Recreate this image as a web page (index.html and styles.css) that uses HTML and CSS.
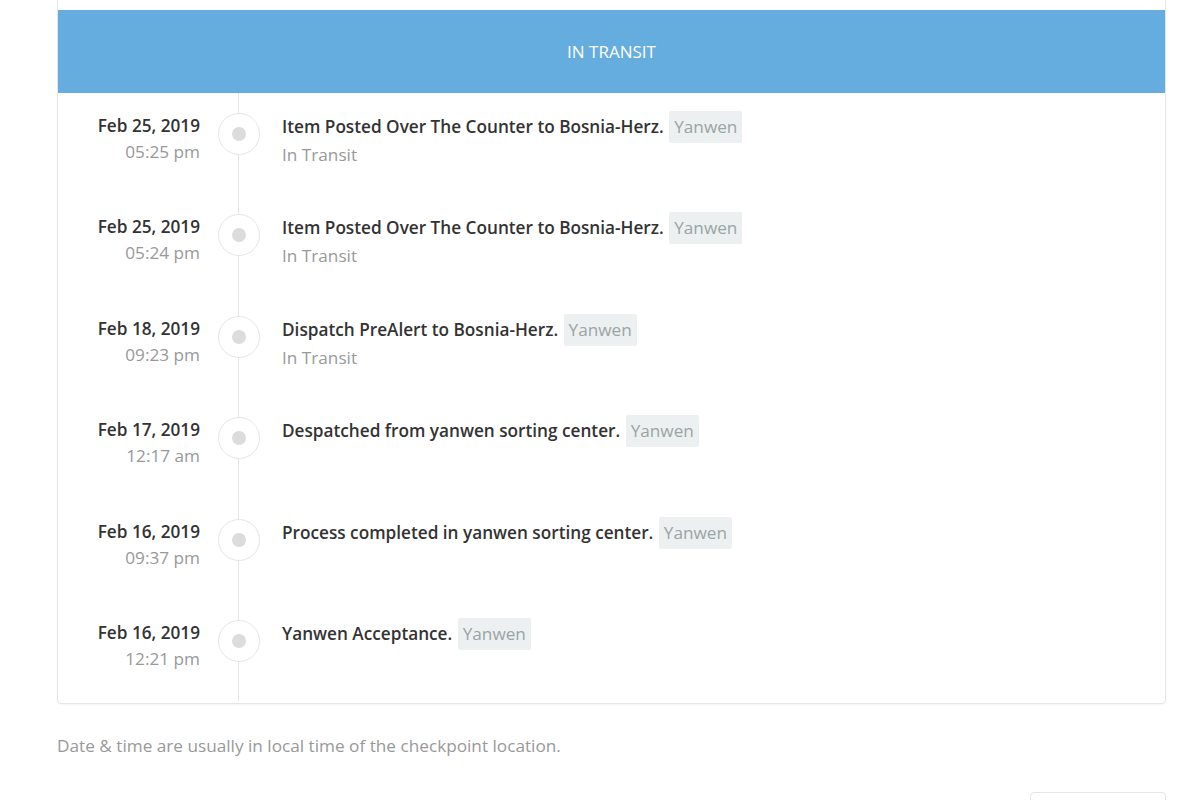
FILE: index.html
```html
<!DOCTYPE html>
<html lang="en">
<head>
<meta charset="utf-8">
<title>Tracking</title>
<link rel="stylesheet" href="styles.css">
</head>
<body>
<div class="page">
  <section class="card">
    <div class="status-bar">IN TRANSIT</div>
    <ol class="timeline">
      <li class="row">
        <div class="when"><div class="date">Feb 25, 2019</div><div class="time">05:25 pm</div></div>
        <div class="marker"><span class="dot"></span></div>
        <div class="what"><div class="title">Item Posted Over The Counter to Bosnia-Herz. <span class="badge">Yanwen</span></div><div class="sub">In Transit</div></div>
      </li>
      <li class="row">
        <div class="when"><div class="date">Feb 25, 2019</div><div class="time">05:24 pm</div></div>
        <div class="marker"><span class="dot"></span></div>
        <div class="what"><div class="title">Item Posted Over The Counter to Bosnia-Herz. <span class="badge">Yanwen</span></div><div class="sub">In Transit</div></div>
      </li>
      <li class="row">
        <div class="when"><div class="date">Feb 18, 2019</div><div class="time">09:23 pm</div></div>
        <div class="marker"><span class="dot"></span></div>
        <div class="what"><div class="title">Dispatch PreAlert to Bosnia-Herz. <span class="badge">Yanwen</span></div><div class="sub">In Transit</div></div>
      </li>
      <li class="row">
        <div class="when"><div class="date">Feb 17, 2019</div><div class="time">12:17 am</div></div>
        <div class="marker"><span class="dot"></span></div>
        <div class="what"><div class="title">Despatched from yanwen sorting center. <span class="badge">Yanwen</span></div></div>
      </li>
      <li class="row">
        <div class="when"><div class="date">Feb 16, 2019</div><div class="time">09:37 pm</div></div>
        <div class="marker"><span class="dot"></span></div>
        <div class="what"><div class="title">Process completed in yanwen sorting center. <span class="badge">Yanwen</span></div></div>
      </li>
      <li class="row">
        <div class="when"><div class="date">Feb 16, 2019</div><div class="time">12:21 pm</div></div>
        <div class="marker"><span class="dot"></span></div>
        <div class="what"><div class="title">Yanwen Acceptance. <span class="badge">Yanwen</span></div></div>
      </li>
    </ol>
  </section>
  <p class="note">Date &amp; time are usually in local time of the checkpoint location.</p>
  <div class="actions"><span class="btn"></span></div>
</div>
</body>
</html>
```

FILE: styles.css
```css
html, body {
  margin: 0;
  padding: 0;
  overflow: hidden;
  background: #fff;
}
body {
  font-family: "Open Sans", "Liberation Sans", sans-serif;
  color: #333;
}
.page {
  width: 1109px;
  margin-left: 57px;
}
.card {
  margin-top: -10px;
  padding: 19px 0 2px;
  border: 1px solid #e3e5e6;
  border-radius: 4px;
  box-shadow: 0 1px 2px rgba(0,0,0,0.04);
}
.status-bar {
  height: 83px;
  background: #65acdf;
  color: #fff;
  font-size: 17px;
  display: flex;
  align-items: center;
  justify-content: center;
}
.timeline {
  list-style: none;
  margin: 0;
  padding: 0;
}
.row {
  display: grid;
  grid-template-columns: 142px 76px 1fr;
  height: 101.4px;
}
.when {
  text-align: right;
  padding-top: 20px;
  font-size: 17.2px;
  line-height: 26px;
}
.date { color: #333; font-weight: 600; }
.time { color: #999; }
.marker {
  background: linear-gradient(#e6e6e6, #e6e6e6) center / 1px 100% no-repeat;
  display: flex;
  justify-content: center;
  align-items: flex-start;
  padding-top: 20px;
  padding-left: 1px;
}
.dot {
  width: 42px;
  height: 42px;
  box-sizing: border-box;
  border: 1px solid #e6e6e6;
  border-radius: 50%;
  background: #fff;
  display: flex;
  align-items: center;
  justify-content: center;
}
.dot::after {
  content: "";
  width: 14px;
  height: 14px;
  border-radius: 50%;
  background: #dcdcdc;
}
.what {
  padding: 18px 0 0 6px;
  font-size: 17.2px;
}
.title {
  line-height: 32px;
  color: #333;
  font-weight: 600;
}
.badge {
  display: inline-block;
  background: #edf0f0;
  color: #9aa4a5;
  font-weight: 400;
  padding: 0 5px;
  margin-left: 1px;
  border-radius: 2px;
  line-height: 32px;
}
.sub {
  color: #999;
  line-height: 24px;
}
.note {
  margin: 31px 0 0;
  font-size: 17.2px;
  line-height: 22px;
  color: #999;
}
.actions {
  display: flex;
  justify-content: flex-end;
  margin-top: 35px;
}
.btn {
  display: block;
  width: 134px;
  height: 40px;
  border: 1px solid #e3e5e6;
  border-radius: 4px;
}
```
